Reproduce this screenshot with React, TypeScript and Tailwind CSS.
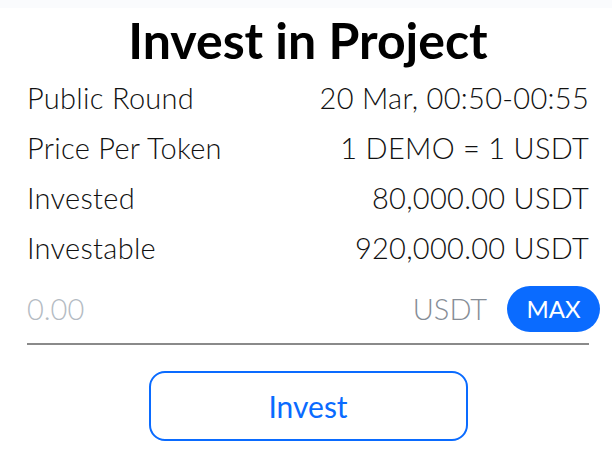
const rows: [string, string][] = [
  ["Public Round", "20 Mar, 00:50-00:55"],
  ["Price Per Token", "1 DEMO = 1 USDT"],
  ["Invested", "80,000.00 USDT"],
  ["Investable", "920,000.00 USDT"],
];

export default function App() {
  return (
    <div
      className="w-[612px] h-[456px] bg-white overflow-hidden"
      style={{ fontFamily: "Lato, 'Open Sans', sans-serif" }}
    >
      <div className="h-[8px] bg-[#fafbfd]" />
      <div className="pl-[27px] pr-[23px]">
        <h1 className="h-[64px] flex items-center justify-center text-[50px] font-bold text-black">
          Invest in Project
        </h1>
        <div className="mt-[1px]">
          {rows.map(([label, value]) => (
            <div
              key={label}
              className="h-[50px] flex items-center justify-between text-[29px] font-light tracking-[0.01em] text-[#111]"
            >
              <span>{label}</span>
              <span>{value}</span>
            </div>
          ))}
        </div>
        <div className="mt-[12px] flex items-center h-[47px] -mr-[11px]">
          <span className="flex-1 text-[29px] font-light text-[#b4bbc3]">0.00</span>
          <span className="text-[29px] font-light text-[#868d96] mr-[20px]">USDT</span>
          <button className="h-[46px] w-[93px] rounded-full bg-[#0a6bff] text-white text-[24px]">
            MAX
          </button>
        </div>
        <div className="mt-[11px] h-[2px] bg-[#8a8a8a]" />
        <div className="flex justify-center mt-[26px]">
          <button className="w-[319px] h-[70px] rounded-[16px] border-2 border-[#0a6bff] text-[#0a6bff] text-[30px]">
            Invest
          </button>
        </div>
      </div>
    </div>
  );
}
